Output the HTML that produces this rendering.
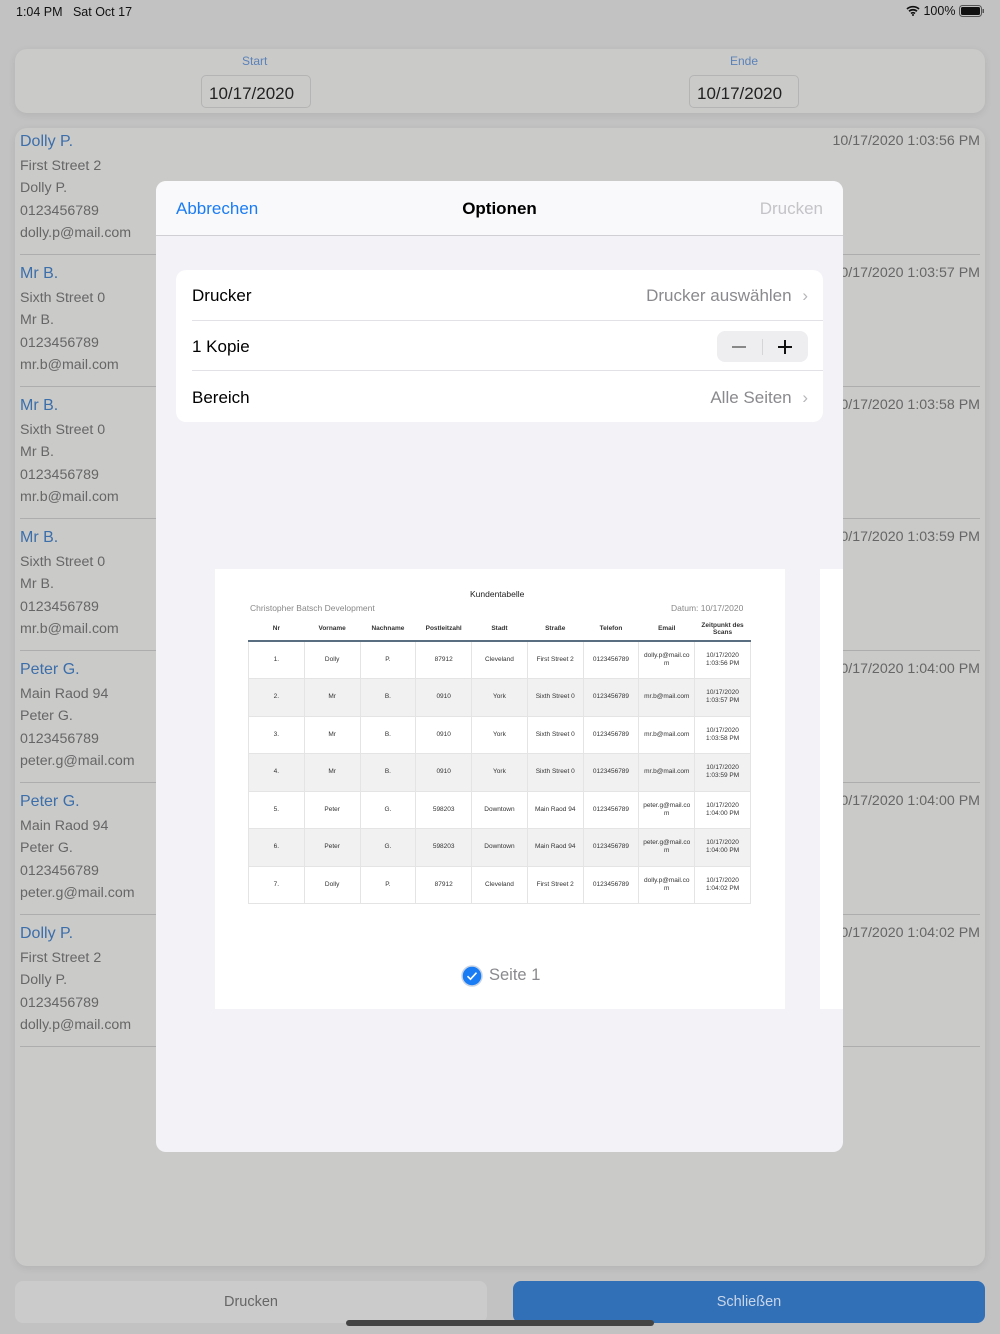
<!DOCTYPE html>
<html><head><meta charset="utf-8"><style>
*{box-sizing:border-box;margin:0;padding:0}
body{width:1000px;height:1334px;background:#c2c2c2;font-family:"Liberation Sans",sans-serif;position:relative;overflow:hidden}
.abs{position:absolute}
.card{background:#cacac9;border-radius:12px;box-shadow:0 2px 8px rgba(0,0,0,.08)}
.row{position:absolute;left:20px;width:960px;height:127px;border-bottom:1px solid #adadad}
.row .n{position:absolute;left:0;top:5px;font-size:16px;color:#3c6eaa}
.row .l{position:absolute;left:0;font-size:14.2px;color:#666}
.row .t{position:absolute;right:0;top:5px;font-size:14.2px;color:#666}
.date{position:absolute;top:75px;width:110px;height:33px;border:1px solid #b4b4b4;border-radius:5px;font-size:17px;color:#222;padding:8px 0 0 7px}
.lab{position:absolute;top:54px;font-size:12px;color:#5b82b8}
table{border-collapse:collapse;position:absolute;left:248px;top:617px;width:503px;table-layout:fixed;font-size:6.5px;color:#333;text-align:center}
th{font-weight:bold;height:24px;border-bottom:2px solid #5a6e82;font-size:6.5px;line-height:7px}
td{height:37.5px;border:1px solid #e4e4e4;line-height:8px}
tr.g td{background:#f1f1f1}
</style></head><body>
<div class="abs" style="left:16px;top:5px;font-size:12.5px;color:#111">1:04 PM&nbsp;&nbsp;&nbsp;Sat Oct 17</div>
<div class="abs" style="left:906px;top:4px;font-size:12.5px;color:#111">
<svg width="14" height="11" viewBox="0 0 14 11" style="vertical-align:-1px"><path d="M1 4a9 9 0 0 1 12 0M3 6.3a6 6 0 0 1 8 0M5 8.5a3 3 0 0 1 4 0" stroke="#111" stroke-width="1.7" fill="none"/><circle cx="7" cy="10" r="1" fill="#111"/></svg> 100%
<svg width="26" height="12" viewBox="0 0 26 12" style="vertical-align:-2px"><rect x=".5" y=".5" width="22" height="11" rx="3" fill="none" stroke="#555"/><rect x="2" y="2" width="19" height="8" rx="1.5" fill="#111"/><rect x="23.5" y="4" width="1.5" height="4" fill="#555"/></svg></div>

<div class="abs card" style="left:15px;top:49px;width:970px;height:64px"></div>
<div class="lab" style="left:242px">Start</div>
<div class="lab" style="left:730px">Ende</div>
<div class="date" style="left:201px">10/17/2020</div>
<div class="date" style="left:689px">10/17/2020</div>

<div class="abs card" style="left:15px;top:128px;width:970px;height:1138px"></div>
<div class="row" style="top:128px"><div class="n">Dolly P.</div><div class="l" style="top:30px">First Street 2</div><div class="l" style="top:52px">Dolly P.</div><div class="l" style="top:75px">0123456789</div><div class="l" style="top:97px">dolly.p@mail.com</div><div class="t">10/17/2020 1:03:56 PM</div></div>
<div class="row" style="top:260px"><div class="n">Mr B.</div><div class="l" style="top:30px">Sixth Street 0</div><div class="l" style="top:52px">Mr B.</div><div class="l" style="top:75px">0123456789</div><div class="l" style="top:97px">mr.b@mail.com</div><div class="t">10/17/2020 1:03:57 PM</div></div>
<div class="row" style="top:392px"><div class="n">Mr B.</div><div class="l" style="top:30px">Sixth Street 0</div><div class="l" style="top:52px">Mr B.</div><div class="l" style="top:75px">0123456789</div><div class="l" style="top:97px">mr.b@mail.com</div><div class="t">10/17/2020 1:03:58 PM</div></div>
<div class="row" style="top:524px"><div class="n">Mr B.</div><div class="l" style="top:30px">Sixth Street 0</div><div class="l" style="top:52px">Mr B.</div><div class="l" style="top:75px">0123456789</div><div class="l" style="top:97px">mr.b@mail.com</div><div class="t">10/17/2020 1:03:59 PM</div></div>
<div class="row" style="top:656px"><div class="n">Peter G.</div><div class="l" style="top:30px">Main Raod 94</div><div class="l" style="top:52px">Peter G.</div><div class="l" style="top:75px">0123456789</div><div class="l" style="top:97px">peter.g@mail.com</div><div class="t">10/17/2020 1:04:00 PM</div></div>
<div class="row" style="top:788px"><div class="n">Peter G.</div><div class="l" style="top:30px">Main Raod 94</div><div class="l" style="top:52px">Peter G.</div><div class="l" style="top:75px">0123456789</div><div class="l" style="top:97px">peter.g@mail.com</div><div class="t">10/17/2020 1:04:00 PM</div></div>
<div class="row" style="top:920px"><div class="n">Dolly P.</div><div class="l" style="top:30px">First Street 2</div><div class="l" style="top:52px">Dolly P.</div><div class="l" style="top:75px">0123456789</div><div class="l" style="top:97px">dolly.p@mail.com</div><div class="t">10/17/2020 1:04:02 PM</div></div>

<div class="abs" style="left:15px;top:1281px;width:472px;height:42px;background:#cbcbcb;border-radius:8px;text-align:center;font-size:14.5px;color:#666;padding-top:13px">Drucken</div>
<div class="abs" style="left:513px;top:1281px;width:472px;height:42px;background:#316fb6;border-radius:8px;text-align:center;font-size:14.5px;color:#c8d6ea;padding-top:13px">Schließen</div>
<div class="abs" style="left:346px;top:1320px;width:308px;height:6px;background:#444;border-radius:3px"></div>

<div class="abs" style="left:156px;top:181px;width:687px;height:971px;background:#f2f2f7;border-radius:10px;overflow:hidden">
 <div class="abs" style="left:0;top:0;width:687px;height:55px;background:#f9f9fb;border-bottom:1px solid #d0d0d4"></div>
 <div class="abs" style="left:20px;top:18px;font-size:17px;color:#1a7cf5">Abbrechen</div>
 <div class="abs" style="left:0;width:687px;top:18px;font-size:17px;color:#000;text-align:center;font-weight:bold">Optionen</div>
 <div class="abs" style="right:20px;top:18px;font-size:17px;color:#c4c4c8">Drucken</div>
 <div class="abs" style="left:20px;top:89px;width:647px;height:152px;background:#fff;border-radius:10px"></div>
 <div class="abs" style="left:36px;top:139px;width:631px;height:1px;background:#e2e2e6"></div>
 <div class="abs" style="left:36px;top:189px;width:631px;height:1px;background:#e2e2e6"></div>
 <div class="abs" style="left:36px;top:105px;font-size:17px;color:#000">Drucker</div>
 <div class="abs" style="right:35px;top:105px;font-size:17px;color:#8a8a8e">Drucker auswählen <span style="color:#b5b5ba;margin-left:6px">›</span></div>
 <div class="abs" style="left:36px;top:156px;font-size:17px;color:#000">1 Kopie</div>
 <div class="abs" style="left:561px;top:150px;width:91px;height:31px;background:#eeeef0;border-radius:8px">
  <div class="abs" style="left:15px;top:15px;width:14px;height:1.5px;background:#888"></div>
  <div class="abs" style="left:45px;top:8px;width:1px;height:16px;background:#d5d5d8"></div>
  <div class="abs" style="left:61px;top:15px;width:14px;height:1.5px;background:#111"></div>
  <div class="abs" style="left:67px;top:9px;width:1.5px;height:14px;background:#111"></div>
 </div>
 <div class="abs" style="left:36px;top:207px;font-size:17px;color:#000">Bereich</div>
 <div class="abs" style="right:35px;top:207px;font-size:17px;color:#8a8a8e">Alle Seiten <span style="color:#b5b5ba;margin-left:6px">›</span></div>
 <div class="abs" style="left:59px;top:388px;width:570px;height:440px;background:#fff"></div>
 <div class="abs" style="left:664px;top:388px;width:23px;height:440px;background:#fff"></div>
</div>

<div class="abs" style="left:470px;top:589px;font-size:8.5px;color:#222">Kundentabelle</div>
<div class="abs" style="left:250px;top:603px;font-size:8.5px;color:#888">Christopher Batsch Development</div>
<div class="abs" style="left:671px;top:603px;font-size:8.5px;color:#888">Datum: 10/17/2020</div>
<table>
<tr><th>Nr</th><th>Vorname</th><th>Nachname</th><th>Postleitzahl</th><th>Stadt</th><th>Straße</th><th>Telefon</th><th>Email</th><th>Zeitpunkt des<br>Scans</th></tr>
<tr><td>1.</td><td>Dolly</td><td>P.</td><td>87912</td><td>Cleveland</td><td>First Street 2</td><td>0123456789</td><td>dolly.p@mail.co<br>m</td><td>10/17/2020<br>1:03:56 PM</td></tr>
<tr class="g"><td>2.</td><td>Mr</td><td>B.</td><td>0910</td><td>York</td><td>Sixth Street 0</td><td>0123456789</td><td>mr.b@mail.com</td><td>10/17/2020<br>1:03:57 PM</td></tr>
<tr><td>3.</td><td>Mr</td><td>B.</td><td>0910</td><td>York</td><td>Sixth Street 0</td><td>0123456789</td><td>mr.b@mail.com</td><td>10/17/2020<br>1:03:58 PM</td></tr>
<tr class="g"><td>4.</td><td>Mr</td><td>B.</td><td>0910</td><td>York</td><td>Sixth Street 0</td><td>0123456789</td><td>mr.b@mail.com</td><td>10/17/2020<br>1:03:59 PM</td></tr>
<tr><td>5.</td><td>Peter</td><td>G.</td><td>598203</td><td>Downtown</td><td>Main Raod 94</td><td>0123456789</td><td>peter.g@mail.co<br>m</td><td>10/17/2020<br>1:04:00 PM</td></tr>
<tr class="g"><td>6.</td><td>Peter</td><td>G.</td><td>598203</td><td>Downtown</td><td>Main Raod 94</td><td>0123456789</td><td>peter.g@mail.co<br>m</td><td>10/17/2020<br>1:04:00 PM</td></tr>
<tr><td>7.</td><td>Dolly</td><td>P.</td><td>87912</td><td>Cleveland</td><td>First Street 2</td><td>0123456789</td><td>dolly.p@mail.co<br>m</td><td>10/17/2020<br>1:04:02 PM</td></tr>
</table>
<svg class="abs" style="left:461px;top:965px" width="22" height="22" viewBox="0 0 22 22"><circle cx="11" cy="11" r="10" fill="#1a7cf5" stroke="#c8d4e4" stroke-width="1.5"/><path d="M6.5 11.2l3 3 6-6.5" stroke="#fff" stroke-width="1.6" fill="none"/></svg>
<div class="abs" style="left:489px;top:966px;font-size:16.5px;color:#8a8a8e">Seite 1</div>
</body></html>
